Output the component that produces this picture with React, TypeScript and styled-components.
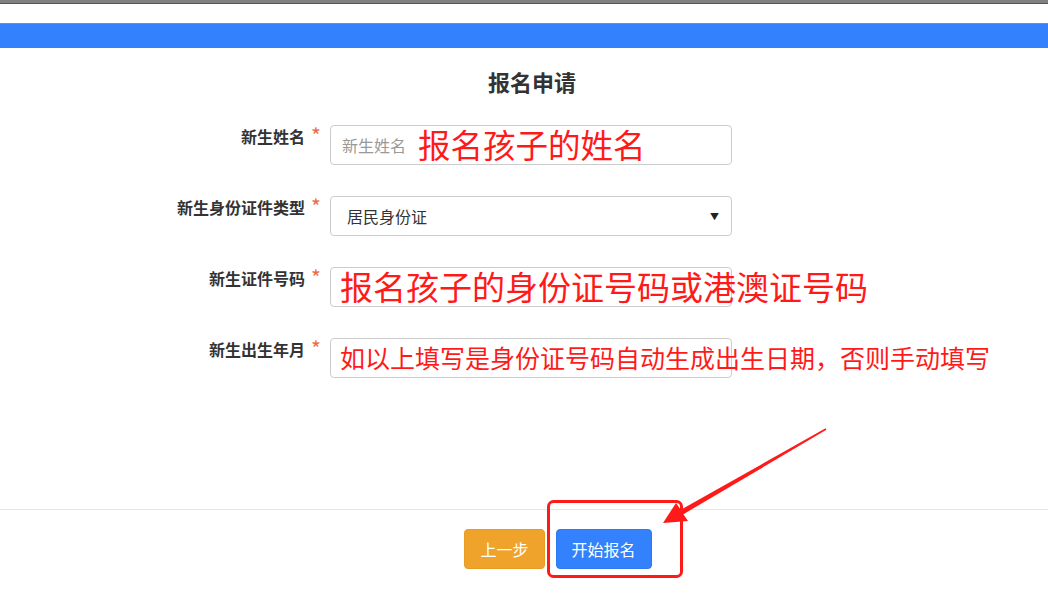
import styled, { createGlobalStyle } from "styled-components";

const GlobalStyle = createGlobalStyle`
    html, body {
        margin: 0;
        padding: 0;
        background: #fff;
        font-family: "Noto Sans CJK SC", "Noto Sans", sans-serif;
        color: #333;
    }
    * {
        box-sizing: border-box;
    }
`;

interface Field {
    label: string;
    kind: "input" | "select";
    placeholder?: string;
    value?: string;
    note?: string;
    noteSize?: number;
    noteLeft?: number;
}

const fields: Field[] = [
    { label: "新生姓名", kind: "input", placeholder: "新生姓名", note: "报名孩子的姓名", noteSize: 32.5, noteLeft: 88 },
    { label: "新生身份证件类型", kind: "select", value: "居民身份证" },
    { label: "新生证件号码", kind: "input", note: "报名孩子的身份证号码或港澳证号码", noteSize: 33, noteLeft: 10 },
    { label: "新生出生年月", kind: "input", note: "如以上填写是身份证号码自动生成出生日期，否则手动填写", noteSize: 25, noteLeft: 10 },
];

function App() {
    return (
        <>
            <GlobalStyle />
            <Page>
                <TopBar />
                <HeaderBar />
                <Title>报名申请</Title>
                <Form>
                    {fields.map((f) => (
                        <Row key={f.label}>
                            <Label>{f.label}</Label>
                            <Star>*</Star>
                            <Control>
                                {f.kind === "select" ? (
                                    <SelectBox>
                                        <span>{f.value}</span>
                                        <Caret>▼</Caret>
                                    </SelectBox>
                                ) : (
                                    <TextInput type="text" placeholder={f.placeholder} />
                                )}
                                {f.note && (
                                    <Note style={{ fontSize: f.noteSize, left: f.noteLeft }}>{f.note}</Note>
                                )}
                            </Control>
                        </Row>
                    ))}
                </Form>
                <Divider />
                <Footer>
                    <Button $variant="warning">上一步</Button>
                    <Button $variant="primary">开始报名</Button>
                </Footer>
                <Markup viewBox="0 0 1048 599" width="1048" height="599">
                    <rect x="548.5" y="501.5" width="133" height="75" rx="5" fill="none" stroke="#ff1a1a" strokeWidth="3" />
                    <polygon
                        fill="#ff1a1a"
                        points="663,523 676,503 680.8,509.8 825.6,428.2 826.4,429.8 683.4,514.2 688,521"
                    />
                </Markup>
            </Page>
        </>
    );
}

export default App;

const Page = styled.div`
    position: relative;
    width: 100%;
    height: 599px;
    overflow: hidden;
`;

const TopBar = styled.div`
    height: 4px;
    background: #808080;
    border-bottom: 1px solid #555;
`;

const HeaderBar = styled.div`
    margin-top: 19px;
    height: 25px;
    background: #3381fc;
    border-top: 1px solid #8a8a8a;
`;

const Title = styled.h2`
    margin: 18px 0 0;
    padding-left: 16px;
    text-align: center;
    font-size: 22px;
    line-height: 30px;
    font-weight: bold;
    color: #333;
`;

const Form = styled.div`
    margin-top: 29px;
    display: flex;
    flex-direction: column;
    gap: 31px;
`;

const Row = styled.div`
    display: flex;
    align-items: flex-start;
`;

const Label = styled.div`
    width: 305px;
    text-align: right;
    font-size: 16px;
    font-weight: bold;
    line-height: 22px;
    color: #333;
`;

const Star = styled.div`
    width: 25px;
    padding-left: 6px;
    font-size: 21px;
    line-height: 21px;
    color: #ee6a46;
`;

const Control = styled.div`
    position: relative;
    width: 402px;
    height: 40px;
`;

const TextInput = styled.input`
    width: 100%;
    height: 100%;
    padding: 0 11px;
    border: 1px solid #ccc;
    border-radius: 4px;
    font-family: inherit;
    font-size: 16px;
    color: #333;
    outline: none;

    &::placeholder {
        color: #999;
    }
`;

const SelectBox = styled.div`
    display: flex;
    align-items: center;
    justify-content: space-between;
    width: 100%;
    height: 100%;
    padding: 0 12px 0 16px;
    border: 1px solid #ccc;
    border-radius: 4px;
    font-size: 16px;
    color: #333;
`;

const Caret = styled.span`
    font-size: 9px;
    color: #222;
`;

const Note = styled.div`
    position: absolute;
    top: 50%;
    transform: translateY(-52%);
    white-space: nowrap;
    line-height: 1;
    color: #ff1a1a;
    pointer-events: none;
`;

const Divider = styled.div`
    margin-top: 131px;
    height: 1px;
    background: #e5e5e5;
`;

const Footer = styled.div`
    display: flex;
    justify-content: center;
    gap: 11px;
    padding: 19px 0 0 68px;
`;

const Button = styled.button<{ $variant: "primary" | "warning" }>`
    height: 40px;
    padding: 0 15px;
    border: 1px solid ${(p) => (p.$variant === "primary" ? "#2e79ee" : "#e99c22")};
    border-radius: 4px;
    background: ${(p) => (p.$variant === "primary" ? "#3381fc" : "#f0a32a")};
    color: #fff;
    font-family: inherit;
    font-size: 16px;
    cursor: pointer;
`;

const Markup = styled.svg`
    position: absolute;
    top: 0;
    left: 0;
    pointer-events: none;
`;
